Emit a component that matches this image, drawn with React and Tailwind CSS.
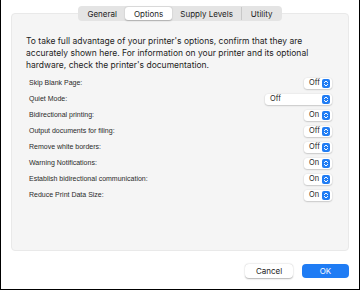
import React from 'react';

const rows = [
  { label: 'Skip Blank Page:', value: 'Off' },
  { label: 'Quiet Mode:', value: 'Off', wide: true },
  { label: 'Bidirectional printing:', value: 'On' },
  { label: 'Output documents for filing:', value: 'Off' },
  { label: 'Remove white borders:', value: 'Off' },
  { label: 'Warning Notifications:', value: 'On' },
  { label: 'Establish bidirectional communication:', value: 'On' },
  { label: 'Reduce Print Data Size:', value: 'On' },
];

function Stepper() {
  return (
    <svg width="8" height="9" viewBox="0 0 8 9" className="shrink-0">
      <rect x="0" y="0" width="8" height="9" rx="2" fill="#1f7cf4" />
      <path d="M2.3 3.6 L4 2 L5.7 3.6" stroke="#fff" strokeWidth="1" fill="none" strokeLinecap="round" strokeLinejoin="round" />
      <path d="M2.3 5.4 L4 7 L5.7 5.4" stroke="#fff" strokeWidth="1" fill="none" strokeLinecap="round" strokeLinejoin="round" />
    </svg>
  );
}

function Popup({ value, wide }) {
  return (
    <div
      className={`flex items-center justify-between h-[11px] bg-white rounded-[3px] shadow-[0_0.5px_1.5px_rgba(0,0,0,0.3)] pl-[5px] pr-[2px] ${
        wide ? 'w-[67px]' : 'w-[28px]'
      }`}
    >
      <span className="text-[7.5px] leading-none text-[#222]">{value}</span>
      <Stepper />
    </div>
  );
}

export default function App() {
  return (
    <div
      className="w-[360px] h-[290px] bg-white border-l border-r border-b border-black flex flex-col px-[10px] overflow-hidden"
      style={{ fontFamily: 'Inter, "Liberation Sans", sans-serif' }}
    >
      {/* Tabs */}
      <div className="flex justify-center pt-[6px] -mb-[8px] relative z-10">
        <div className="flex items-center h-[15px] bg-[#e4e4e4] rounded-[4px] p-[1px] text-[8px] text-[#222]">
          <div className="px-[8.5px] h-full flex items-center">General</div>
          <div className="px-[8.5px] h-full flex items-center bg-white rounded-[3px] shadow-[0_0.5px_1.5px_rgba(0,0,0,0.25)]">Options</div>
          <div className="px-[8.5px] h-full flex items-center border-r border-[#c8c8c8]">Supply Levels</div>
          <div className="px-[8.5px] h-full flex items-center">Utility</div>
        </div>
      </div>

      {/* Panel */}
      <div className="h-[238px] bg-[#f5f5f5] border border-[#e9e9e9] rounded-[4px] pt-[21px] pl-[14px] pr-[16px]">
        <p className="text-[8.5px] leading-[12px] text-[#1d1d1d] whitespace-nowrap">
          To take full advantage of your printer's options, confirm that they are
          <br />
          accurately shown here. For information on your printer and its optional
          <br />
          hardware, check the printer's documentation.
        </p>
        <div className="mt-[4px] pl-[3px]">
          {rows.map((r) => (
            <div key={r.label} className="flex items-center justify-between h-[16px]">
              <span className="text-[7px] text-[#2a2a2a] font-['Liberation_Sans',sans-serif]">{r.label}</span>
              <Popup value={r.value} wide={r.wide} />
            </div>
          ))}
        </div>
      </div>

      {/* Buttons */}
      <div className="flex justify-end gap-[9px] mt-[13px]">
        <button className="w-[48px] h-[14px] bg-white rounded-[4px] shadow-[0_0.5px_1.5px_rgba(0,0,0,0.3)] text-[8px] text-[#222]">
          Cancel
        </button>
        <button className="w-[47px] h-[14px] bg-[#1f7cf4] rounded-[4px] text-[8px] text-white">
          OK
        </button>
      </div>
    </div>
  );
}
